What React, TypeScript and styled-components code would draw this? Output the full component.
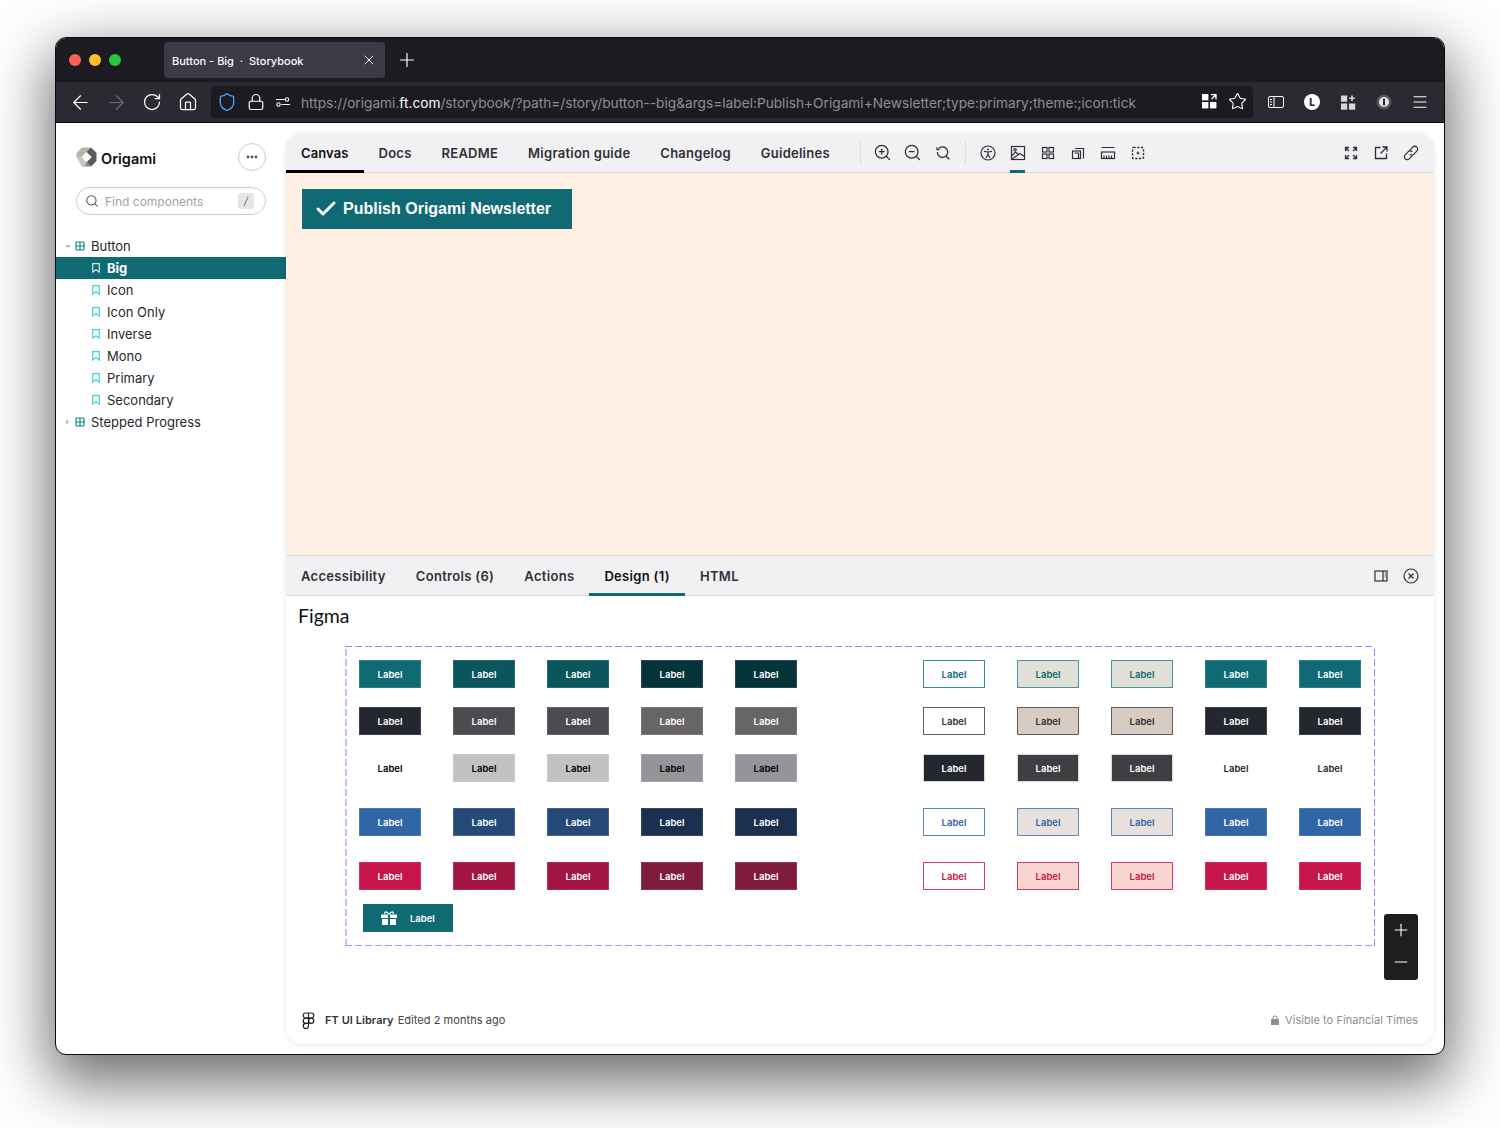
import React from 'react';
import styled, { createGlobalStyle } from 'styled-components';
import {
  ArrowLeft,
  ArrowRight,
  RotateCw,
  Home,
  Shield,
  Lock,
  Star,
  Menu,
  Search,
  X,
  Plus,
  Minus,
  ZoomIn,
  ZoomOut,
  Check,
} from 'lucide-react';

const Global = createGlobalStyle`
  html, body { margin: 0; padding: 0; background: #fff; }
  body { font-family: Inter, "Liberation Sans", sans-serif; }
  * { box-sizing: border-box; }
`;

// Browser chrome

const Page = styled.div`
  width: 1500px;
  height: 1128px;
  padding: 37px 55px 0;
  overflow: hidden;
`;

const Window = styled.div`
  width: 1390px;
  height: 1018px;
  border: 1px solid #0c0c0e;
  border-radius: 11px;
  overflow: hidden;
  background: #fff;
  display: flex;
  flex-direction: column;
  box-shadow: 0 22px 60px 6px rgba(0, 0, 0, 0.58);
`;

const TitleBar = styled.div`
  height: 44px;
  background: #1c1b22;
  display: flex;
  align-items: center;
  padding-left: 13px;
  flex-shrink: 0;
`;

const Lights = styled.div`
  display: flex;
  gap: 8px;
  width: 95px;
`;

const Light = styled.span<{ $c: string }>`
  width: 12px;
  height: 12px;
  border-radius: 50%;
  background: ${(p) => p.$c};
`;

const BrowserTab = styled.div`
  width: 221px;
  height: 36px;
  border-radius: 4px;
  background: #3b3a45;
  color: #fbfbfe;
  font-size: 11px;
  font-weight: 500;
  display: flex;
  align-items: center;
  justify-content: space-between;
  padding: 0 8px;
  white-space: pre;

  span {
    padding-top: 2px;
  }
`;

const NewTab = styled.span`
  margin-left: 11px;
  display: flex;
  color: #fbfbfe;
`;

const NavBar = styled.div`
  height: 41px;
  background: #2b2a33;
  border-bottom: 1px solid #0c0c0e;
  display: flex;
  align-items: center;
  flex-shrink: 0;
`;

const NavBtn = styled.span<{ $dim?: boolean }>`
  width: 36px;
  display: flex;
  align-items: center;
  justify-content: center;
  color: ${(p) => (p.$dim ? '#6d6c74' : '#fbfbfe')};
`;

const NavGroup = styled.div`
  display: flex;
  align-items: center;
  padding-left: 6px;
  width: 155px;
`;

const UrlBar = styled.div`
  width: 1042px;
  height: 32px;
  margin-top: -1px;
  border-radius: 4px;
  background: #1c1b22;
  display: flex;
  align-items: center;
  padding: 0 6px;
`;

const UrlIcons = styled.div`
  display: flex;
  align-items: center;
  gap: 10px;
  width: 84px;
`;

const UrlText = styled.div`
  flex: 1;
  padding-top: 2px;
  font-size: 13.7px;
  color: #8f8e94;
  white-space: nowrap;
  overflow: hidden;

  b {
    color: #fbfbfe;
    font-weight: 400;
  }
`;

const UrlRight = styled.div`
  display: flex;
  align-items: center;
  gap: 11px;
  color: #fbfbfe;
`;

const NavRight = styled.div`
  display: flex;
  align-items: center;
  padding-left: 5px;
  color: #fbfbfe;
`;

// Storybook shell

const Content = styled.div`
  flex: 1;
  display: flex;
  min-height: 0;
`;

const Sidebar = styled.aside`
  width: 230px;
  flex-shrink: 0;
  padding-top: 20px;
`;

const Brand = styled.div`
  display: flex;
  align-items: center;
  justify-content: space-between;
  padding: 0 20px;
`;

const Logo = styled.div`
  display: flex;
  align-items: center;
  gap: 4px;
  font-size: 14.5px;
  font-weight: 600;
  color: #111;

  span {
    padding-top: 2px;
  }
`;

const DotsButton = styled.span`
  width: 28px;
  height: 28px;
  border-radius: 50%;
  border: 1px solid #ccc;
  display: flex;
  align-items: center;
  justify-content: center;
  color: #555;
`;

const SearchBox = styled.div`
  height: 28px;
  margin: 16px 20px 0;
  border: 1px solid #ccc;
  border-radius: 14px;
  display: flex;
  align-items: center;
  padding: 0 11px 0 8px;
  gap: 6px;
  font-size: 12px;
  color: #a4a4a4;
`;

const SearchHint = styled.span`
  flex: 1;
`;

const Kbd = styled.span`
  width: 16px;
  height: 16px;
  background: #e6e6e6;
  border-radius: 2px;
  color: #666;
  font-size: 11px;
  font-style: italic;
  display: flex;
  align-items: center;
  justify-content: center;
`;

const Tree = styled.nav`
  margin-top: 20px;
`;

const TreeRow = styled.div<{ $selected?: boolean; $leaf?: boolean }>`
  height: 22px;
  display: flex;
  align-items: center;
  padding-left: ${(p) => (p.$leaf ? 36 : 9)}px;
  font-size: 13px;
  font-weight: ${(p) => (p.$selected ? 700 : 400)};
  color: ${(p) => (p.$selected ? '#fff' : '#26272b')};
  background: ${(p) => (p.$selected ? '#106a74' : 'transparent')};
`;

const Caret = styled.span<{ $open?: boolean }>`
  width: 0;
  height: 0;
  margin-right: ${(p) => (p.$open ? 4 : 6)}px;
  ${(p) =>
    p.$open
      ? 'border-left: 3px solid transparent; border-right: 3px solid transparent; border-top: 3px solid #bbb;'
      : 'margin-left: 1px; border-top: 3px solid transparent; border-bottom: 3px solid transparent; border-left: 3px solid #bbb;'}
`;

const RowIcon = styled.span<{ $gap: number }>`
  display: flex;
  margin-right: ${(p) => p.$gap}px;
`;

const Main = styled.main`
  flex: 1;
  margin: 10px 10px 10px 0;
  border-radius: 16px;
  overflow: hidden;
  display: flex;
  flex-direction: column;
  background: #fff;
  box-shadow: 0 1px 5px rgba(0, 0, 0, 0.1);
`;

const BarRow = styled.div`
  height: 40px;
  flex-shrink: 0;
  background: #f1f1f3;
  border-bottom: 1px solid #dcdcde;
  display: flex;
  align-items: stretch;
  padding-right: 8px;
  color: #26272b;
`;

const Tab = styled.div<{ $active?: string; $ls?: number }>`
  display: flex;
  align-items: center;
  padding: 3px 15px 0;
  font-size: 13px;
  font-weight: 600;
  letter-spacing: ${(p) => p.$ls ?? 0.25}px;
  color: ${(p) => (p.$active ? '#111' : '#2f3035')};
  margin-bottom: -1px;
  border-bottom: 3px solid ${(p) => p.$active ?? 'transparent'};
  white-space: nowrap;
`;

const Divider = styled.span<{ $lead?: boolean }>`
  width: 1px;
  height: 24px;
  align-self: center;
  background: #dcdcde;
  margin: 0 7px 0 ${(p) => (p.$lead ? 15 : 7)}px;
`;

const ToolButton = styled.span<{ $active?: boolean }>`
  width: 30px;
  display: flex;
  align-items: center;
  justify-content: center;
  position: relative;
  color: #2f3035;

  ${(p) =>
    p.$active &&
    `&::after {
      content: '';
      position: absolute;
      left: 7px;
      right: 8px;
      bottom: -1px;
      height: 3px;
      background: #106a74;
    }`}
`;

const Spacer = styled.span`
  flex: 1;
`;

const Canvas = styled.div`
  flex: 1;
  background: #fff0e3;
  padding: 16px;
  border-bottom: 1px solid #dcdcde;
`;

const PublishButton = styled.button`
  display: inline-flex;
  align-items: center;
  height: 40px;
  width: 270px;
  padding: 0 0 0 12px;
  gap: 5px;
  border: 0;
  background: #106a74;
  color: #fff;
  font-family: 'Liberation Sans', Arial, sans-serif;
  font-size: 16px;
  font-weight: 700;
`;

const DesignPanel = styled.section`
  height: 448px;
  flex-shrink: 0;
  position: relative;
  display: flex;
  flex-direction: column;
  background: #fff;
`;

const FigmaTitle = styled.h2`
  margin: 0;
  padding: 8px 0 0 12px;
  height: 50px;
  font-family: Lato, sans-serif;
  font-size: 19.5px;
  line-height: 24px;
  font-weight: 400;
  color: #111;
`;

// Dashes are 7 on, 3 off: a CSS dashed border is too short at this width.
const Frame = styled.div`
  width: 1030px;
  height: 300px;
  margin-left: 59px;
  padding: 14px 14px 0;
  background:
    repeating-linear-gradient(90deg, #9a85ff 0 7px, transparent 7px 10px) top / 100% 1px no-repeat,
    repeating-linear-gradient(90deg, #a897ff 0 7px, transparent 7px 10px) bottom / 100% 1px no-repeat,
    repeating-linear-gradient(0deg, #c8bdff 0 7px, transparent 7px 10px) left / 2px 100% no-repeat,
    repeating-linear-gradient(0deg, #9a85ff 0 7px, transparent 7px 10px) right / 1px 100% no-repeat;
`;

const SwatchRow = styled.div<{ $top: number }>`
  margin-top: ${(p) => p.$top}px;
  display: flex;
  justify-content: space-between;
`;

const SwatchGroup = styled.div`
  display: flex;
  gap: 32px;
`;

const Swatch = styled.div<{ $bg: string; $fg: string; $line?: string }>`
  width: 62px;
  height: 28px;
  background: ${(p) => p.$bg};
  color: ${(p) => p.$fg};
  border: 1px solid ${(p) => p.$line ?? 'rgba(255, 255, 255, 0.12)'};
  font-size: 9.5px;
  font-weight: 600;
  display: flex;
  align-items: center;
  justify-content: center;
`;

const GiftSwatch = styled.div`
  width: 90px;
  height: 28px;
  margin: 14px 0 0 4px;
  background: #106a74;
  color: #fff;
  font-size: 9.5px;
  font-weight: 600;
  display: flex;
  align-items: center;
  padding-left: 18px;
  gap: 13px;
`;

const ZoomControl = styled.div`
  position: absolute;
  left: 1098px;
  top: 318px;
  width: 34px;
  height: 66px;
  padding-top: 6px;
  border-radius: 3px;
  background: #1e1e1e;
  color: #fff;
  display: flex;
  flex-direction: column;
  align-items: center;
  gap: 12px;
`;

const Footer = styled.footer`
  margin-top: auto;
  height: 48px;
  padding: 0 16px;
  display: flex;
  align-items: center;
  font-size: 11px;
  letter-spacing: 0.05px;
  color: #444;
`;

const FooterName = styled.strong`
  font-weight: 600;
  color: #333;
  margin: 0 4px 0 10px;
`;

const Visible = styled.span`
  margin-left: auto;
  display: flex;
  align-items: center;
  gap: 6px;
  color: #8e8e8e;
`;

// Drawn icons

type IconProps = { size?: number; children: React.ReactNode };

const Svg = ({ size = 16, children }: IconProps) => (
  <svg
    width={size}
    height={size}
    viewBox="0 0 16 16"
    fill="none"
    stroke="currentColor"
    strokeWidth={1.2}
  >
    {children}
  </svg>
);

const OrigamiLogo = () => (
  <svg width="21" height="20" viewBox="0 0 21 20">
    <path d="M6 0.5h9L20.5 6 10.5 10 6 14 0.5 10V6z" fill="#b9b5a7" />
    <path d="M15 0.5 20.5 6v8L15 19.5 10.5 15 15.5 10 10.5 5z" fill="#5b5b5b" />
    <path d="M10.5 15 6 19.5h9z" fill="#8b8a82" />
    <path d="M0.5 10 6 19.5h3l1.5-4.5-5.5-5z" fill="#c9c6ba" />
    <path d="M10.5 5l5 5-5 5-5-5z" fill="#fff" />
  </svg>
);

const Bookmark = ({ color }: { color: string }) => (
  <svg width="8" height="10" viewBox="0 0 8 10" fill="none" stroke={color} strokeWidth="1.2">
    <path d="M.7.7h6.6v8.4L4 6.8.7 9.1z" />
  </svg>
);

const ComponentGlyph = () => (
  <svg width="10" height="10" viewBox="0 0 10 10" fill="none" stroke="#1c7b85" strokeWidth="1.2">
    <rect x="1" y="1" width="8" height="8" rx="1" />
    <path d="M5 1v8M1 5h8" />
  </svg>
);

const TuneIcon = () => (
  <svg width="16" height="16" viewBox="0 0 16 16" fill="none" stroke="#fbfbfe" strokeWidth="1.1">
    <circle cx="3.5" cy="10.5" r="1.7" />
    <circle cx="12" cy="5.5" r="1.7" />
    <path d="M1 5.5h9M6.5 10.5H15" />
  </svg>
);

const QrArrow = () => (
  <svg width="15" height="15" viewBox="0 0 15 15" fill="#fff">
    <rect width="6.4" height="6.4" />
    <rect y="8" width="6.4" height="6.4" />
    <rect x="8" y="8" width="6.4" height="6.4" />
    <path d="M9 .6h5v5M13.6 1 9.6 5" fill="none" stroke="#fff" strokeWidth="1.3" />
  </svg>
);

const SidebarIcon = () => (
  <svg width="16" height="12" viewBox="0 0 16 12" fill="none" stroke="#fbfbfe" strokeWidth="1">
    <rect x=".5" y=".5" width="15" height="11" rx="1.5" />
    <path d="M6 .5v11M2 3.5h2M2 6h2M2 8.5h2" />
  </svg>
);

const ProfileBadge = () => (
  <svg width="16" height="16" viewBox="0 0 16 16">
    <circle cx="8" cy="8" r="8" fill="#fff" />
    <text x="8" y="11.5" textAnchor="middle" fontSize="10" fontWeight="800" fill="#2b2a33">
      L
    </text>
  </svg>
);

const ExtensionIcon = () => (
  <svg width="15" height="15" viewBox="0 0 15 15" fill="#d8d8da">
    <rect y=".5" width="6.2" height="6.2" />
    <rect y="8.5" width="6.2" height="6.2" />
    <rect x="8" y="8.5" width="6.2" height="6.2" />
    <path d="M10.2.5h1.6v2h2v1.6h-2v2h-1.6v-2h-2V2.5h2z" />
  </svg>
);

const PasswordBadge = () => (
  <svg width="16" height="16" viewBox="0 0 16 16">
    <circle cx="8" cy="8" r="7.5" fill="#55555a" />
    <circle cx="8" cy="8" r="5" fill="#e8e8e8" />
    <rect x="7" y="4.5" width="2" height="7" rx=".6" fill="#2b2a33" />
  </svg>
);

const DotsIcon = () => (
  <svg width="12" height="4" viewBox="0 0 12 4" fill="currentColor">
    <circle cx="2" cy="2" r="1.4" />
    <circle cx="6" cy="2" r="1.4" />
    <circle cx="10" cy="2" r="1.4" />
  </svg>
);

const ZoomReset = () => (
  <Svg>
    <path d="M3.6 3.7A5.2 5.2 0 1 1 2.3 7" />
    <path d="M2 2.2v2.4h2.4" />
    <path d="M10.9 10.9 14.3 14.3" strokeWidth="1.4" />
  </Svg>
);

const A11y = () => (
  <Svg>
    <circle cx="8" cy="8" r="7" />
    <circle cx="8" cy="4.5" r="1" fill="currentColor" stroke="none" />
    <path d="M4 6.3 8 7l4-.7M8 7v2.5M8 9.5 6 13M8 9.5l2 3.5" />
  </Svg>
);

const PhotoIcon = () => (
  <Svg>
    <rect x="1.5" y="1.5" width="13" height="13" />
    <path d="M1.5 11 5.500 7l3 2.500 1.500-1 4.500 3M1.500 14.500l7-5" />
    <circle cx="5" cy="4.7" r="1.2" />
  </Svg>
);

const GridIcon = () => (
  <Svg>
    <rect x="2.5" y="2.5" width="4.5" height="4.5" />
    <rect x="9" y="2.5" width="4.5" height="4.5" />
    <rect x="2.5" y="9" width="4.5" height="4.5" />
    <rect x="9" y="9" width="4.5" height="4.5" />
  </Svg>
);

const FrameIcon = () => (
  <Svg>
    <rect x="2.5" y="6" width="8" height="7.5" />
    <path d="M5 3.5h8.5v10" />
    <path d="M4.5 8h4v5.5" />
  </Svg>
);

const RulerIcon = () => (
  <Svg>
    <path d="M1.5 2.5h13" />
    <rect x="1.5" y="7" width="13" height="6.5" />
    <path d="M4 13.5V10.500M6.500 13.500V10.500M9 13.500V10.500M11.500 13.500V10.500" />
  </Svg>
);

const OutlineIcon = () => (
  <Svg>
    <rect x="2.5" y="2.5" width="11" height="11" rx="1" strokeDasharray="2.2 1.5" strokeWidth="1.4" />
    <path d="M8 6.5v3M6.5 8h3" />
  </Svg>
);

const ExpandIcon = () => (
  <Svg>
    <path
      d="M2.5 6V2.5H6M10 2.5h3.5V6M13.5 10v3.5H10M6 13.5H2.5V10M3 3l3 3M13 3l-3 3M13 13l-3-3M3 13l3-3"
      strokeWidth="1.3"
    />
  </Svg>
);

const ShareIcon = () => (
  <Svg>
    <path d="M7.5 2.5h-5v11h11v-5" strokeWidth="1.3" />
    <path d="M9.5 2h4.5v4.5M14 2 7.5 8.5" strokeWidth="1.3" />
  </Svg>
);

const LinkIcon = () => (
  <Svg>
    <path d="M6.7 5.3 9.8 2.2a2.6 2.6 0 0 1 4 4L10.7 9.3a2.6 2.6 0 0 1-3.9-.3" />
    <path d="M9.3 10.7 6.2 13.800a2.600 2.600 0 0 1-4-4L5.300 6.700a2.600 2.600 0 0 1 3.900.3" />
  </Svg>
);

const PanelIcon = () => (
  <Svg>
    <rect x="2" y="3" width="12" height="10" />
    <path d="M10 3v10M11.8 5h1M11.8 7h1M11.8 9h1" />
  </Svg>
);

const CloseCircle = () => (
  <Svg>
    <circle cx="8" cy="8" r="7" />
    <path d="M5.5 5.5l5 5M10.5 5.5l-5 5" strokeWidth="1.3" />
  </Svg>
);

const GiftIcon = () => (
  <svg width="16" height="14" viewBox="0 0 16 14" fill="#fff">
    <rect y="3.5" width="7" height="3.5" />
    <rect x="9" y="3.5" width="7" height="3.5" />
    <rect x="1" y="8" width="6" height="6" />
    <rect x="9" y="8" width="6" height="6" />
    <path d="M8 3.5C6 0 3 .5 4 2.8M8 3.5C10 0 13 .5 12 2.8" fill="none" stroke="#fff" strokeWidth="1.3" />
  </svg>
);

const FigmaMark = () => (
  <svg width="13" height="17" viewBox="0 0 13 17" fill="none" stroke="#222" strokeWidth="1.2">
    <path d="M6.5 1H3.8a2.6 2.6 0 0 0 0 5.2h2.700zM6.500 1h2.700a2.600 2.600 0 0 1 0 5.200H6.500z" />
    <path d="M6.5 6.2H3.8a2.6 2.6 0 0 0 0 5.2h2.700z" />
    <circle cx="9.2" cy="8.8" r="2.6" />
    <path d="M6.5 11.4H3.8a2.6 2.6 0 1 0 2.7 2.6z" />
  </svg>
);

const SmallLock = () => (
  <svg width="8" height="10" viewBox="0 0 8 10">
    <path d="M2 4.5V3a2 2 0 0 1 4 0v1.5" fill="none" stroke="#8e8e8e" strokeWidth="1.1" />
    <rect y="4" width="8" height="6" rx=".6" fill="#8e8e8e" />
  </svg>
);

// Data

type Spec = [bg: string, fg: string, line?: string];

const W = '#ffffff';
const teal = '#106a74';
const ink = '#24272f';
const blue = '#3166a6';
const red = '#c6154a';

const twin = (a: string, fg: string, line?: string): Spec[] => [
  [a, fg, line],
  [a, fg, line],
];

const rows: { top: number; left: Spec[]; right: Spec[] }[] = [
  {
    top: 0,
    left: [[teal, W], ...twin('#0b565c', W), ...twin('#04333a', W)],
    right: [[W, teal, '#35888f'], ...twin('#e0e0d6', teal, '#469499'), ...twin(teal, W)],
  },
  {
    top: 19,
    left: [[ink, W], ...twin('#4b4c50', W), ...twin('#676565', W)],
    right: [[W, '#33302e', '#5e5c60'], ...twin('#d8ccc2', '#33302e', '#5e5c60'), ...twin(ink, W)],
  },
  {
    top: 19,
    left: [[W, '#000', W], ...twin('#c1c2c4', '#000'), ...twin('#939598', '#000')],
    right: [[ink, W, '#d8d8da'], ...twin('#3d3f43', W, '#d8d8da'), ...twin(W, '#24272f', W)],
  },
  {
    top: 26,
    left: [[blue, W], ...twin('#264a78', W), ...twin('#1b2f4f', W)],
    right: [[W, blue, '#5787bf'], ...twin('#e7e0dc', blue, '#5787bf'), ...twin(blue, W)],
  },
  {
    top: 26,
    left: [[red, W], ...twin('#a11642', W), ...twin('#7f1b3c', W)],
    right: [[W, red, '#d8366f'], ...twin('#f9d5d0', red, '#d8366f'), ...twin(red, W)],
  },
];

const stories = ['Icon', 'Icon Only', 'Inverse', 'Mono', 'Primary', 'Secondary'];

const Swatches = ({ specs }: { specs: Spec[] }) => (
  <SwatchGroup>
    {specs.map(([bg, fg, line], i) => (
      <Swatch key={i} $bg={bg} $fg={fg} $line={line}>
        Label
      </Swatch>
    ))}
  </SwatchGroup>
);

export default function App() {
  return (
    <Page>
      <Global />
      <Window>
        <TitleBar>
          <Lights>
            <Light $c="#ff5f57" />
            <Light $c="#febc2e" />
            <Light $c="#28c840" />
          </Lights>
          <BrowserTab>
            <span>Button - Big  ·  Storybook</span>
            <X size={16} strokeWidth={1.4} />
          </BrowserTab>
          <NewTab>
            <Plus size={22} strokeWidth={1.3} />
          </NewTab>
        </TitleBar>
        <NavBar>
          <NavGroup>
            <NavBtn>
              <ArrowLeft size={23} strokeWidth={1.25} />
            </NavBtn>
            <NavBtn $dim>
              <ArrowRight size={23} strokeWidth={1.25} />
            </NavBtn>
            <NavBtn>
              <RotateCw size={20} strokeWidth={1.5} />
            </NavBtn>
            <NavBtn>
              <Home size={20} strokeWidth={1.5} />
            </NavBtn>
          </NavGroup>
          <UrlBar>
            <UrlIcons>
              <Shield size={20} strokeWidth={1.6} color="#45a1ff" />
              <Lock size={18} strokeWidth={1.6} color="#fbfbfe" />
              <TuneIcon />
            </UrlIcons>
            <UrlText>
              https://origami.<b>ft.com</b>
              /storybook/?path=/story/button--big&args=label:Publish+Origami+Newsletter;type:primary;theme:;icon:tick
            </UrlText>
            <UrlRight>
              <QrArrow />
              <Star size={19} strokeWidth={1.4} />
            </UrlRight>
          </UrlBar>
          <NavRight>
            <NavBtn>
              <SidebarIcon />
            </NavBtn>
            <NavBtn>
              <ProfileBadge />
            </NavBtn>
            <NavBtn>
              <ExtensionIcon />
            </NavBtn>
            <NavBtn>
              <PasswordBadge />
            </NavBtn>
            <NavBtn>
              <Menu size={18} strokeWidth={1.4} />
            </NavBtn>
          </NavRight>
        </NavBar>
        <Content>
          <Sidebar>
            <Brand>
              <Logo>
                <OrigamiLogo />
                <span>Origami</span>
              </Logo>
              <DotsButton>
                <DotsIcon />
              </DotsButton>
            </Brand>
            <SearchBox>
              <Search size={14} strokeWidth={1.8} color="#555" />
              <SearchHint>Find components</SearchHint>
              <Kbd>/</Kbd>
            </SearchBox>
            <Tree>
              <TreeRow>
                <Caret $open />
                <RowIcon $gap={6}>
                  <ComponentGlyph />
                </RowIcon>
                Button
              </TreeRow>
              <TreeRow $leaf $selected>
                <RowIcon $gap={7}>
                  <Bookmark color="#cfe6e8" />
                </RowIcon>
                Big
              </TreeRow>
              {stories.map((s) => (
                <TreeRow $leaf key={s}>
                  <RowIcon $gap={7}>
                    <Bookmark color="#3fd6d9" />
                  </RowIcon>
                  {s}
                </TreeRow>
              ))}
              <TreeRow>
                <Caret />
                <RowIcon $gap={6}>
                  <ComponentGlyph />
                </RowIcon>
                Stepped Progress
              </TreeRow>
            </Tree>
          </Sidebar>
          <Main>
            <BarRow>
              <Tab $active="#000" $ls={0.1}>
                Canvas
              </Tab>
              <Tab>Docs</Tab>
              <Tab>README</Tab>
              <Tab>Migration guide</Tab>
              <Tab>Changelog</Tab>
              <Tab>Guidelines</Tab>
              <Divider $lead />
              <ToolButton>
                <ZoomIn size={19} strokeWidth={1.6} />
              </ToolButton>
              <ToolButton>
                <ZoomOut size={19} strokeWidth={1.6} />
              </ToolButton>
              <ToolButton>
                <ZoomReset />
              </ToolButton>
              <Divider />
              <ToolButton>
                <A11y />
              </ToolButton>
              <ToolButton $active>
                <PhotoIcon />
              </ToolButton>
              <ToolButton>
                <GridIcon />
              </ToolButton>
              <ToolButton>
                <FrameIcon />
              </ToolButton>
              <ToolButton>
                <RulerIcon />
              </ToolButton>
              <ToolButton>
                <OutlineIcon />
              </ToolButton>
              <Spacer />
              <ToolButton>
                <ExpandIcon />
              </ToolButton>
              <ToolButton>
                <ShareIcon />
              </ToolButton>
              <ToolButton>
                <LinkIcon />
              </ToolButton>
            </BarRow>
            <Canvas>
              <PublishButton>
                <Check size={24} strokeWidth={3} />
                Publish Origami Newsletter
              </PublishButton>
            </Canvas>
            <BarRow>
              <Tab $ls={0.32}>Accessibility</Tab>
              <Tab $ls={0.32}>Controls (6)</Tab>
              <Tab $ls={0.32}>Actions</Tab>
              <Tab $ls={0.32} $active={teal}>
                Design (1)
              </Tab>
              <Tab $ls={0.32}>HTML</Tab>
              <Spacer />
              <ToolButton>
                <PanelIcon />
              </ToolButton>
              <ToolButton>
                <CloseCircle />
              </ToolButton>
            </BarRow>
            <DesignPanel>
              <FigmaTitle>Figma</FigmaTitle>
              <Frame>
                {rows.map((r, i) => (
                  <SwatchRow key={i} $top={r.top}>
                    <Swatches specs={r.left} />
                    <Swatches specs={r.right} />
                  </SwatchRow>
                ))}
                <GiftSwatch>
                  <GiftIcon />
                  Label
                </GiftSwatch>
              </Frame>
              <ZoomControl>
                <Plus size={20} strokeWidth={1.3} />
                <Minus size={20} strokeWidth={1.3} />
              </ZoomControl>
              <Footer>
                <FigmaMark />
                <FooterName>FT UI Library</FooterName>
                Edited 2 months ago
                <Visible>
                  <SmallLock />
                  Visible to Financial Times
                </Visible>
              </Footer>
            </DesignPanel>
          </Main>
        </Content>
      </Window>
    </Page>
  );
}
